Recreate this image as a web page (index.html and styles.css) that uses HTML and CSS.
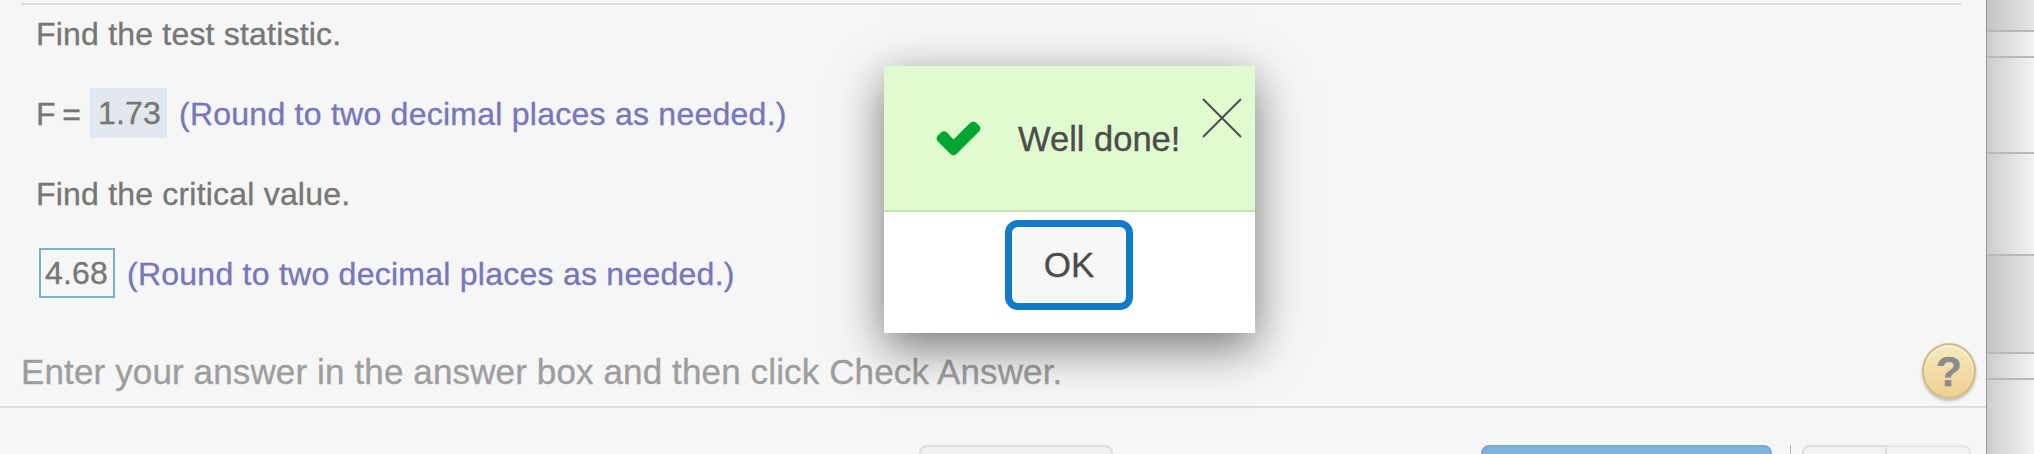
FILE: index.html
```html
<!DOCTYPE html>
<html lang="en">
<head>
<meta charset="utf-8">
<title>Exercise</title>
<link rel="stylesheet" href="styles.css">
</head>
<body>
<div class="app">
  <main class="panel">
    <section class="question">
      <p class="row">Find the test statistic.</p>
      <p class="row"><span class="lhs">F =</span><span class="answer answer-done">1.73</span><span class="hint">(Round to two decimal places as needed.)</span></p>
      <p class="row">Find the critical value.</p>
      <p class="row"><span class="answer answer-active">4.68</span><span class="hint">(Round to two decimal places as needed.)</span></p>
    </section>
    <div class="instruction">
      <span class="instruction-text">Enter your answer in the answer box and then click Check Answer.</span>
      <button class="help" aria-label="Help">?</button>
    </div>
    <footer class="actions">
      <span class="btn btn-plain"></span>
      <span class="btn btn-primary"></span>
      <span class="divider"></span>
      <span class="pager"><span class="pager-prev"></span><span class="pager-next"></span></span>
    </footer>
  </main>
  <aside class="backdrop">
    <div class="cell cell-a dim"></div>
    <div class="cell cell-b"></div>
    <div class="cell cell-c"></div>
    <div class="cell cell-d"></div>
    <div class="cell cell-e dim"></div>
    <div class="cell cell-f"></div>
    <div class="cell cell-g"></div>
  </aside>
</div>
<div class="dialog" role="dialog">
  <div class="dialog-head">
    <svg class="check" viewBox="0 0 45 35"><path d="M2 14.500 L5 11.500 Q8 9 11 11.500 L17.500 18.500 L34 2 Q37.500 -1 40.500 2 L43 4.500 Q46 7.500 43 10.500 L20.500 33 Q17.500 35.500 14.500 33 L2 20.500 Q-1 17.500 2 14.500 Z" fill="#00a62f"/></svg>
    <span class="dialog-title">Well done!</span>
    <svg class="close" viewBox="0 0 40 40"><path d="M1 1 L39 39 M39 1 L1 39" stroke="#4c4c4c" stroke-width="1.900" fill="none"/></svg>
  </div>
  <div class="dialog-body"><button class="ok">OK</button></div>
</div>
</body>
</html>
```
FILE: styles.css
```css
* { box-sizing: border-box; }
body {
  margin: 0;
  width: 2034px;
  height: 454px;
  overflow: hidden;
  background: #f6f6f6;
  font-family: "Liberation Sans", Arial, sans-serif;
  -webkit-text-stroke: 0.35px currentColor;
}
p { margin: 0; }
button { font-family: inherit; padding: 0; margin: 0; }
.app { display: flex; height: 454px; }
.panel { width: 1986px; height: 454px; display: flex; flex-direction: column; padding-top: 3px; }
.question {
  height: 325px;
  margin: 0 25px 0 21px;
  padding-left: 15px;
  border-top: 2px solid #d9dee3;
  color: #777;
  font-size: 32px;
  letter-spacing: 0.2px;
}
.row { height: 80px; display: flex; align-items: center; margin-top: -11px; margin-bottom: 11px; white-space: pre; }
.lhs { width: 48px; flex: none; word-spacing: -2.500px; }
.answer { height: 50px; line-height: 51px; flex: none; margin-bottom: 2px; }
.answer-done { margin-left: 6px; width: 77px; padding-left: 8px; background: #e3e7ee; }
.answer-active { margin-left: 3px; width: 76px; padding-left: 4px; border: 2px solid #76b3c5; line-height: 47px; }
.hint { margin-left: 12px; color: #7777bb; letter-spacing: 0.25px; }
.instruction {
  height: 80px;
  padding: 0 10px 0 20px;
  display: flex;
  align-items: center;
  justify-content: space-between;
  border-bottom: 2px solid #d9dee3;
}
.instruction-text { color: #9e9e9e; font-size: 35px; letter-spacing: 0.13px; white-space: nowrap; padding: 9px 0 0 1px; }
.help {
  width: 54px;
  height: 56px;
  margin-top: 7px;
  border: 2px solid #d2bb83;
  border-radius: 50%;
  background: linear-gradient(#f6eac0, #efcf90);
  box-shadow: 0 2px 3px rgba(0,0,0,.25), inset 0 2px 2px rgba(255,255,255,.6);
  color: #8c8c8c;
  font-size: 43px;
  font-weight: bold;
  line-height: 52px;
}
.actions { height: 46px; padding: 37px 15px 0 919px; display: flex; overflow: hidden; }
.btn { height: 60px; flex: none; border-radius: 8px; }
.btn-plain { width: 194px; border: 2px solid #dedede; background: #f1f1f1; }
.btn-primary { width: 291px; margin-left: 368px; background: #7fb3db; border: 2px solid #78aad2; }
.divider { width: 1px; height: 60px; flex: none; margin-left: 18px; background: #b4b4b4; }
.pager { display: flex; width: 169px; height: 60px; margin-left: 11px; flex: none; }
.pager-prev { width: 85px; border: 2px solid #dedede; border-radius: 8px 0 0 0; background: #f2f2f2; }
.pager-next { flex: 1; border: 2px solid #e6e6e6; border-left: 0; border-radius: 0 8px 0 0; background: #f2f2f2; }
.backdrop {
  width: 48px;
  height: 454px;
  display: flex;
  flex-direction: column;
  border-left: 1px solid #989898;
}
.cell { border-bottom: 2px solid #b9b9b9; background: linear-gradient(90deg, #cccccc, #d9d9d9 30%, #e8e8e8 70%, #f2f2f2); }
.dim { background: linear-gradient(90deg, #c4c4c4, #cfcfcf 30%, #dcdcdc 70%, #e6e6e6); }
.cell-a { height: 32px; }
.cell-b { height: 26px; }
.cell-c { height: 96px; }
.cell-d { height: 102px; }
.cell-e { height: 98px; }
.cell-f { height: 26px; }
.cell-g { flex: 1; border: 0; }
.dialog {
  position: absolute;
  left: 884px;
  top: 66px;
  width: 371px;
  height: 267px;
  background: #fff;
  box-shadow: 0 14px 44px rgba(0,0,0,.53);
  color: #4c4c4c;
}
.dialog-head { height: 146px; display: flex; background: #e1fbd1; border-bottom: 2px solid #c2e3ad; }
.check { width: 45px; height: 35px; margin: 55px 0 0 52px; flex: none; }
.dialog-title { font-size: 34.500px; line-height: 40px; margin: 53px 0 0 37px; width: 181px; white-space: nowrap; flex: none; }
.close { width: 40px; height: 40px; margin-top: 32px; margin-left: 3px; flex: none; }
.dialog-body { display: flex; justify-content: center; padding: 8px 1px 0 0; }
.ok {
  width: 128px;
  height: 90px;
  border: 7px solid #107acb;
  border-radius: 13px;
  background: #f7f7f7;
  box-shadow: inset 0 0 0 2px #fff;
  color: #4c4c4c;
  font-size: 35px;
}
```
